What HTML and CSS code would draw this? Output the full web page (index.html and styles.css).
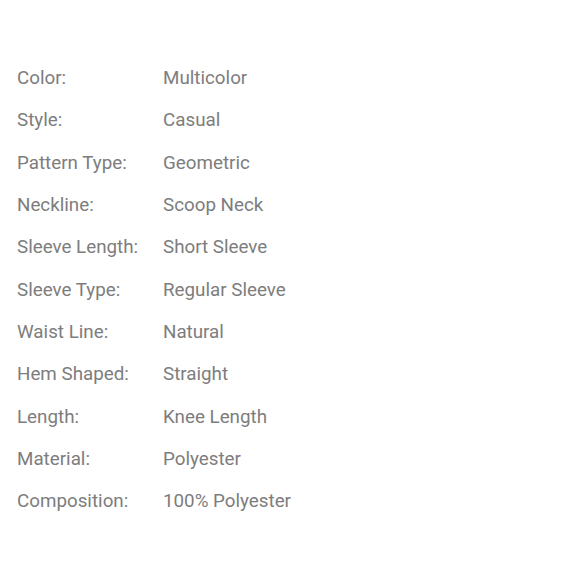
FILE: index.html
```html
<!DOCTYPE html>
<html>
<head>
<meta charset="utf-8">
<link rel="stylesheet" href="styles.css">
</head>
<body>
<div class="specs">
  <div class="label">Color:</div><div class="value">Multicolor</div>
  <div class="label">Style:</div><div class="value">Casual</div>
  <div class="label">Pattern Type:</div><div class="value">Geometric</div>
  <div class="label">Neckline:</div><div class="value">Scoop Neck</div>
  <div class="label">Sleeve Length:</div><div class="value">Short Sleeve</div>
  <div class="label">Sleeve Type:</div><div class="value">Regular Sleeve</div>
  <div class="label">Waist Line:</div><div class="value">Natural</div>
  <div class="label">Hem Shaped:</div><div class="value">Straight</div>
  <div class="label">Length:</div><div class="value">Knee Length</div>
  <div class="label">Material:</div><div class="value">Polyester</div>
  <div class="label">Composition:</div><div class="value">100% Polyester</div>
</div>
</body>
</html>
```
FILE: styles.css
```css
html, body {
  margin: 0;
  background: #ffffff;
}
body {
  font-family: Roboto, "Liberation Sans", sans-serif;
  font-size: 18.8px;
  color: #7d7d7d;
}
.specs {
  display: grid;
  grid-template-columns: 146px 1fr;
  grid-auto-rows: 42.3px;
  align-items: center;
  padding: 57.2px 0 0 17px;
  line-height: 42.3px;
}
.label, .value {
  white-space: nowrap;
}
```
